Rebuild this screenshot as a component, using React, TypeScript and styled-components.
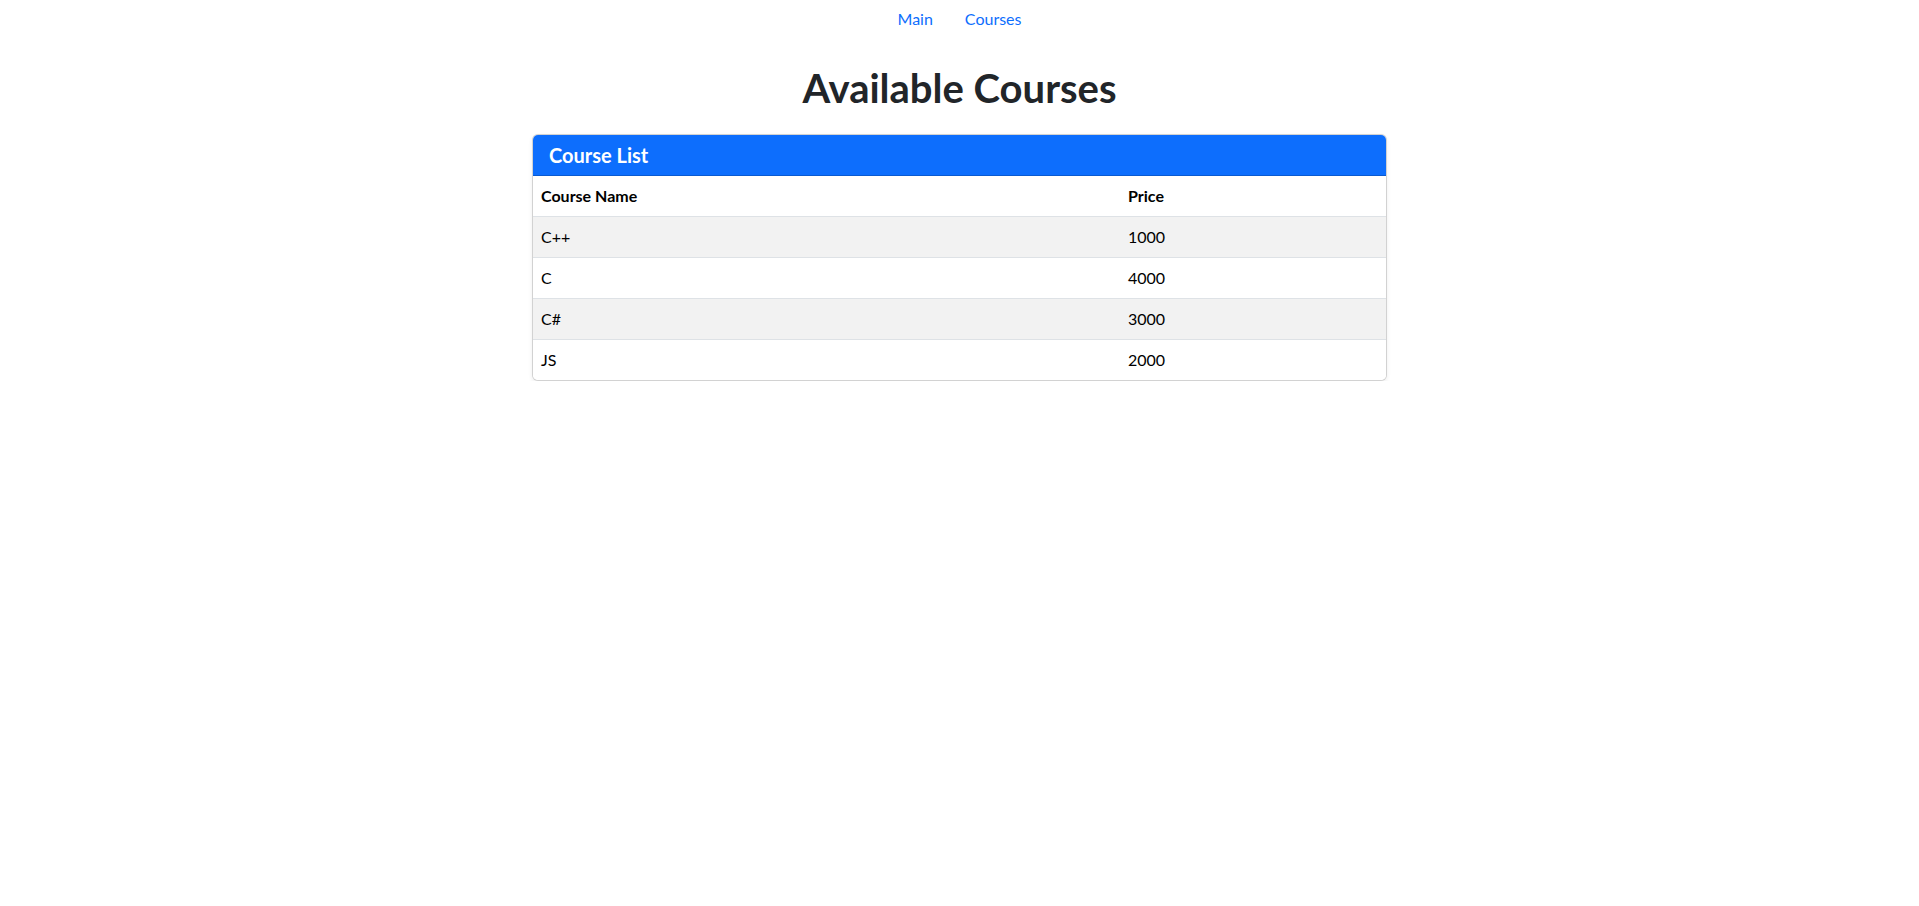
import React from "react";
import styled, { createGlobalStyle } from "styled-components";

const GlobalStyle = createGlobalStyle`
  html, body {
    margin: 0;
    padding: 0;
    background: #ffffff;
  }
  body {
    font-family: "Lato", "Noto Sans", "Open Sans", sans-serif;
    font-size: 16px;
    line-height: 1.5;
    color: #212529;
  }
  * { box-sizing: border-box; }
`;

const Nav = styled.ul`
  display: flex;
  justify-content: center;
  list-style: none;
  margin: 0;
  padding: 0;
`;

const NavLink = styled.a`
  display: block;
  padding: 7px 16px 9px;
  color: #0d6efd;
  text-decoration: none;
  font-size: 16px;
  line-height: 24px;
`;

const Title = styled.h1`
  margin: 24px 0 22px;
  text-align: center;
  font-size: 40px;
  line-height: 48px;
  font-weight: 700;
  color: #212529;
`;

const Card = styled.section`
  width: 855px;
  margin: 0 auto;
  border: 1px solid rgba(0, 0, 0, 0.175);
  border-radius: 6px;
  overflow: hidden;
  background: #fff;
  box-shadow: 0 2px 4px rgba(0, 0, 0, 0.075);
`;

const CardHeader = styled.div`
  background: #0d6efd;
  color: #fff;
  padding: 8px 16px;
  border-bottom: 1px solid rgba(0, 0, 0, 0.175);
`;

const CardTitle = styled.h5`
  margin: 0;
  font-size: 20px;
  line-height: 24px;
  font-weight: 700;
`;

const Table = styled.table`
  width: 100%;
  border-collapse: collapse;
  table-layout: fixed;
  color: #000;
`;

const Th = styled.th<{ $w?: number }>`
  text-align: left;
  padding: 8px;
  font-weight: 700;
  line-height: 24px;
  border-bottom: 1px solid #dee2e6;
  ${(p) => (p.$w ? `width: ${p.$w}px;` : "")}
`;

const Row = styled.tr<{ $striped: boolean }>`
  background: ${(p) => (p.$striped ? "#f2f2f2" : "#ffffff")};
  &:last-child td { border-bottom: none; }
`;

const Td = styled.td`
  padding: 8px;
  line-height: 24px;
  border-bottom: 1px solid #dee2e6;
`;

const courses = [
  { name: "C++", price: 1000 },
  { name: "C", price: 4000 },
  { name: "C#", price: 3000 },
  { name: "JS", price: 2000 },
];

export default function App() {
  return (
    <>
      <GlobalStyle />
      <nav>
        <Nav>
          <li><NavLink href="#">Main</NavLink></li>
          <li><NavLink href="#">Courses</NavLink></li>
        </Nav>
      </nav>
      <Title>Available Courses</Title>
      <Card>
        <CardHeader>
          <CardTitle>Course List</CardTitle>
        </CardHeader>
        <Table>
          <thead>
            <tr>
              <Th $w={587}>Course Name</Th>
              <Th>Price</Th>
            </tr>
          </thead>
          <tbody>
            {courses.map((c, i) => (
              <Row key={c.name} $striped={i % 2 === 0}>
                <Td>{c.name}</Td>
                <Td>{c.price}</Td>
              </Row>
            ))}
          </tbody>
        </Table>
      </Card>
    </>
  );
}
